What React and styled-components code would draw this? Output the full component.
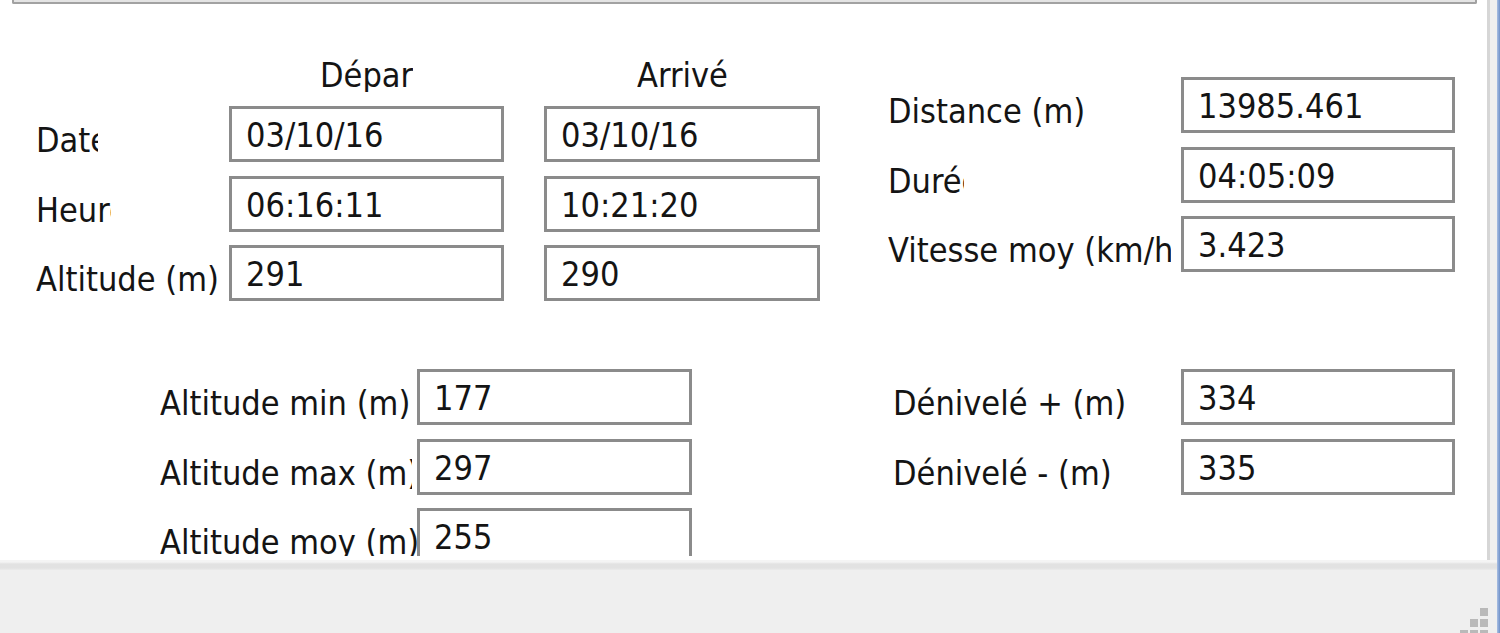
import styled, { createGlobalStyle } from 'styled-components'

const Global = createGlobalStyle`
  html, body {
    margin: 0;
    padding: 0;
    background: #efefef;
    overflow: hidden;
  }
  body {
    font-family: "DejaVu Sans Condensed", "DejaVu Sans", "Liberation Sans", sans-serif;
    font-stretch: condensed;
    font-size: 34px;
    color: #141414;
  }
`

const Window = styled.div`
  display: flex;
  width: 1500px;
  height: 633px;
`
const Main = styled.div`
  flex: 1;
  display: flex;
  flex-direction: column;
  background: #efefef;
`
const Frame = styled.div`
  width: 3px;
  background: linear-gradient(90deg, #a9bfe3, #6f90c8);
`
const Panel = styled.div`
  width: 1487px;
  height: 560px;
  background: #fff;
  border-right: 3px solid #d6d6d6;
`
const Clip = styled.div`
  height: 556px;
  overflow: hidden;
`
const TopBox = styled.div`
  height: 2px;
  margin: 0 10px 0 12px;
  background: #e4e4e4;
  border: 2px solid #a2a2a2;
  border-top: none;
  border-radius: 0 0 2px 2px;
`
const Band = styled.div`
  display: flex;
  align-items: flex-start;
  margin-top: ${(p) => p.$top}px;
`
const Block = styled.div`
  display: flex;
  flex-direction: column;
  gap: 13.5px;
  margin-left: ${(p) => p.$left}px;
  margin-top: ${(p) => p.$top || 0}px;
`
const HeaderRow = styled.div`
  display: flex;
  padding-left: 193px;
  margin-bottom: 0.5px;
`
const HeaderCell = styled.div`
  width: ${(p) => p.$w}px;
  margin-left: ${(p) => p.$gap || 0}px;
  display: flex;
  justify-content: center;
`
const Header = styled.span`
  display: block;
  width: ${(p) => p.$clip}px;
  overflow: hidden;
  white-space: nowrap;
  line-height: 34px;
`
const Row = styled.div`
  display: flex;
  align-items: flex-start;
`
const Label = styled.div`
  width: ${(p) => p.$w}px;
  flex: none;
  overflow: hidden;
  white-space: nowrap;
  padding-top: 12px;
  line-height: 44px;
`
const LabelText = styled.span`
  display: inline-block;
  max-width: ${(p) => (p.$clip ? `${p.$clip}px` : 'none')};
  overflow: hidden;
  vertical-align: top;
`
const Field = styled.div`
  box-sizing: border-box;
  width: ${(p) => p.$w}px;
  height: 56px;
  margin-left: ${(p) => p.$gap || 0}px;
  border: 3px solid #8b8b8b;
  padding: 3px 0 0 14px;
  line-height: 47px;
  white-space: nowrap;
  background: #fff;
`
const Separator = styled.div`
  height: 10px;
  background: linear-gradient(#f4f4f4 0, #f4f4f4 20%, #e2e2e2 40%, #e2e2e2 80%, #ebebeb 100%);
`
const StatusBar = styled.div`
  flex: 1;
  position: relative;
  background: #efefef;
`
const Grip = styled.svg`
  position: absolute;
  right: 8px;
  bottom: 0;
`

const FieldRow = ({ label, clip, labelW, boxW, values, gap }) => (
  <Row>
    <Label $w={labelW}>
      <LabelText $clip={clip}>{label}</LabelText>
    </Label>
    {values.map((v, i) => (
      <Field key={i} $w={boxW[i]} $gap={i > 0 ? gap : 0}>
        {v}
      </Field>
    ))}
  </Row>
)

export default function App() {
  return (
    <Window>
      <Global />
      <Main>
        <Panel>
          <Clip>
            <TopBox />
            <Band $top={54}>
              <Block $left={36}>
                <HeaderRow>
                  <HeaderCell $w={275}>
                    <Header $clip={93}>Départ</Header>
                  </HeaderCell>
                  <HeaderCell $w={276} $gap={40}>
                    <Header $clip={90}>Arrivée</Header>
                  </HeaderCell>
                </HeaderRow>
                <FieldRow label="Date" clip={62} labelW={193} boxW={[275, 276]} gap={40} values={['03/10/16', '03/10/16']} />
                <FieldRow label="Heure" clip={75} labelW={193} boxW={[275, 276]} gap={40} values={['06:16:11', '10:21:20']} />
                <FieldRow label="Altitude (m)" labelW={193} boxW={[275, 276]} gap={40} values={['291', '290']} />
              </Block>
              <Block $left={68} $top={19}>
                <FieldRow label="Distance (m)" labelW={293} boxW={[274]} values={['13985.461']} />
                <FieldRow label="Durée" clip={76} labelW={293} boxW={[274]} values={['04:05:09']} />
                <FieldRow label="Vitesse moy (km/h)" clip={283} labelW={293} boxW={[274]} values={['3.423']} />
              </Block>
            </Band>
            <Band $top={68}>
              <Block $left={160}>
                <FieldRow label="Altitude min (m)" labelW={257} boxW={[275]} values={['177']} />
                <FieldRow label="Altitude max (m)" clip={252} labelW={257} boxW={[275]} values={['297']} />
                <FieldRow label="Altitude moy (m)" labelW={257} boxW={[275]} values={['255']} />
              </Block>
              <Block $left={201}>
                <FieldRow label="Dénivelé + (m)" labelW={288} boxW={[274]} values={['334']} />
                <FieldRow label="Dénivelé - (m)" labelW={288} boxW={[274]} values={['335']} />
              </Block>
            </Band>
          </Clip>
        </Panel>
        <Separator />
        <StatusBar>
          <Grip width="30" height="26" viewBox="0 0 30 26">
            <g fill="#b9b9b9">
              <rect x="21" y="1" width="8" height="8" />
              <rect x="11" y="12" width="8" height="8" />
              <rect x="21" y="12" width="8" height="8" />
              <rect x="1" y="23" width="8" height="8" />
              <rect x="11" y="23" width="8" height="8" />
              <rect x="21" y="23" width="8" height="8" />
            </g>
          </Grip>
        </StatusBar>
      </Main>
      <Frame />
    </Window>
  )
}
